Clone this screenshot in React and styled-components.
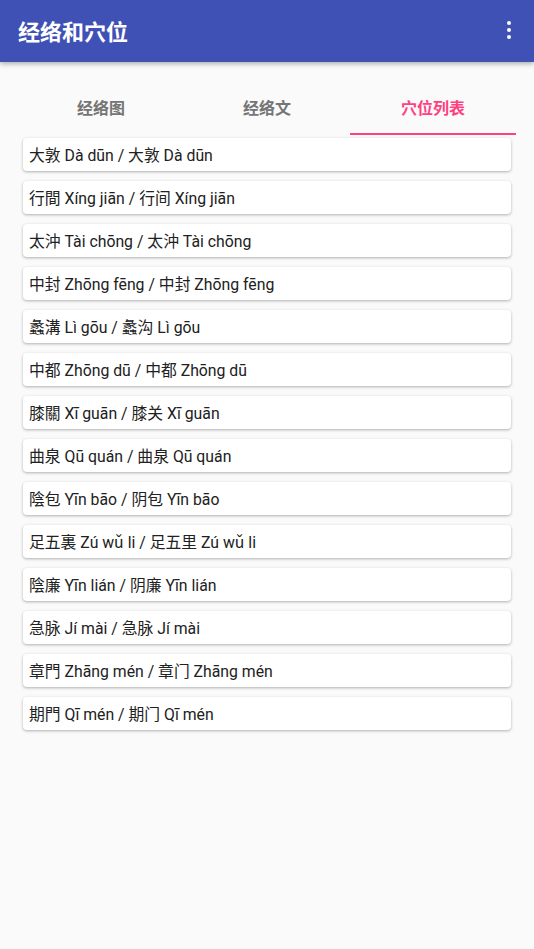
import React from 'react'
import styled, {createGlobalStyle} from 'styled-components'

const GlobalStyle = createGlobalStyle`
  html, body {
    margin: 0;
    padding: 0;
    background: #fafafa;
  }
  body {
    font-family: Roboto, 'Noto Sans CJK SC', sans-serif;
  }
`

const Page = styled.div`
  width: 534px;
  min-height: 949px;
  background: #fafafa;
`

const AppBar = styled.header`
  height: 62px;
  background: #3f51b5;
  display: flex;
  align-items: center;
  justify-content: space-between;
  padding: 0 19px 0 18px;
  box-sizing: border-box;
  box-shadow: 0 2px 5px rgba(0, 0, 0, 0.3);
  position: relative;
`

const Title = styled.h1`
  margin: 0;
  color: #fff;
  font-size: 22px;
  font-weight: 700;
  font-family: Roboto, 'Noto Sans CJK SC', sans-serif;
  margin-top: -2px;
`

const MenuButton = styled.div`
  display: flex;
  flex-direction: column;
  gap: 3px;
  align-items: center;
  padding: 4px;
  margin-top: -2px;
`

const Dot = styled.span`
  width: 4px;
  height: 4px;
  border-radius: 50%;
  background: #fff;
`

const Tabs = styled.nav`
  display: flex;
  margin: 13px 18px 0;
`

const Tab = styled.div`
  flex: 1;
  height: 60px;
  padding-top: 6px;
  display: flex;
  align-items: center;
  justify-content: center;
  font-size: 16px;
  font-weight: 700;
  color: ${p => (p.active ? '#ff4081' : '#757575')};
  border-bottom: 2px solid ${p => (p.active ? '#ff4081' : 'transparent')};
  box-sizing: border-box;
`

const List = styled.div`
  display: flex;
  flex-direction: column;
  gap: 10px;
  padding: 3px 23px 0;
`

const Card = styled.div`
  height: 33px;
  background: #fff;
  border-radius: 4px;
  box-shadow: 0 1px 3px rgba(0, 0, 0, 0.3);
  display: flex;
  align-items: center;
  padding: 0 6px;
  font-size: 15.8px;
  color: #212121;
  box-sizing: border-box;
`

const points = [
  '大敦 Dà dūn / 大敦 Dà dūn',
  '行間 Xíng jiān / 行间 Xíng jiān',
  '太沖 Tài chōng / 太沖 Tài chōng',
  '中封 Zhōng fēng / 中封 Zhōng fēng',
  '蠡溝 Lì gōu / 蠡沟 Lì gōu',
  '中都 Zhōng dū / 中都 Zhōng dū',
  '膝關 Xī guān / 膝关 Xī guān',
  '曲泉 Qū quán / 曲泉 Qū quán',
  '陰包 Yīn bāo / 阴包 Yīn bāo',
  '足五裏 Zú wǔ li / 足五里 Zú wǔ li',
  '陰廉 Yīn lián / 阴廉 Yīn lián',
  '急脉 Jí mài / 急脉 Jí mài',
  '章門 Zhāng mén / 章门 Zhāng mén',
  '期門 Qī mén / 期门 Qī mén'
]

export default function App() {
  return (
    <Page>
      <GlobalStyle />
      <AppBar>
        <Title>经络和穴位</Title>
        <MenuButton>
          <Dot />
          <Dot />
          <Dot />
        </MenuButton>
      </AppBar>
      <Tabs>
        <Tab>经络图</Tab>
        <Tab>经络文</Tab>
        <Tab active>穴位列表</Tab>
      </Tabs>
      <List>
        {points.map(p => (
          <Card key={p}>{p}</Card>
        ))}
      </List>
    </Page>
  )
}
